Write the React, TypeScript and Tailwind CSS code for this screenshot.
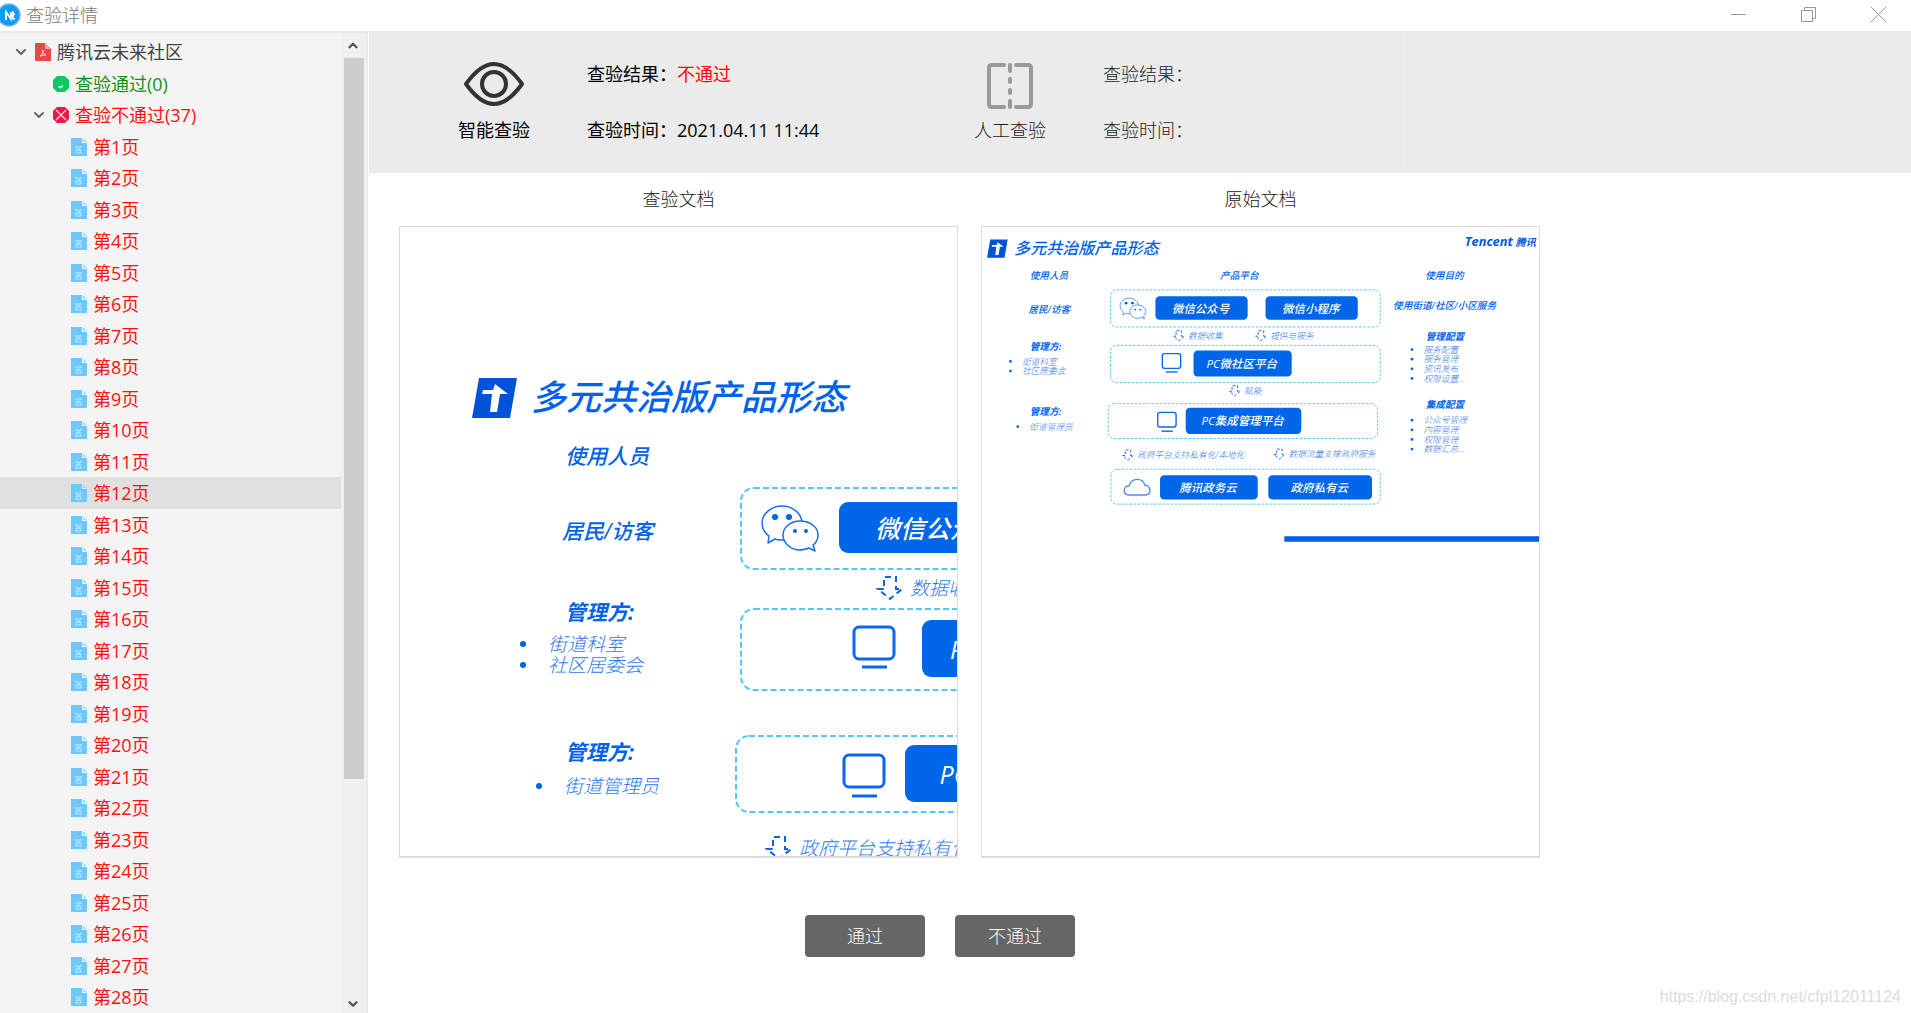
import React, { useState } from "react";
import { ChevronDown, ChevronUp } from "lucide-react";
import clsx from "clsx";

interface Box {
  x: number;
  y: number;
  w: number;
  h: number;
}

interface SlideText {
  x: number;
  y: number;
  text: string;
}

const PAGES = Array.from({ length: 37 }, (_, i) => i + 1);

const HEADINGS: SlideText[] = [
  { x: 104, y: 113, text: "使用人员" },
  { x: 519, y: 113, text: "产品平台" },
  { x: 966, y: 113, text: "使用目的" },
  { x: 101, y: 188, text: "居民/访客" },
  { x: 896, y: 179, text: "使用街道/社区/小区服务" },
];

const BOLD_HEADINGS: SlideText[] = [
  { x: 104, y: 269, text: "管理方:" },
  { x: 104, y: 409, text: "管理方:" },
  { x: 967, y: 247, text: "管理配置" },
  { x: 967, y: 394, text: "集成配置" },
];

const BULLETS: SlideText[] = [
  { x: 87, y: 300, text: "街道科室" },
  { x: 87, y: 321, text: "社区居委会" },
  { x: 103, y: 442, text: "街道管理员" },
  { x: 962, y: 274, text: "服务配置" },
  { x: 962, y: 295, text: "服务管理" },
  { x: 962, y: 316, text: "资讯发布" },
  { x: 962, y: 337, text: "权限设置…" },
  { x: 962, y: 428, text: "公众号管理" },
  { x: 962, y: 449, text: "内容管理" },
  { x: 962, y: 470, text: "权限管理" },
  { x: 962, y: 491, text: "数据汇总…" },
];

const FLOWS: SlideText[] = [
  { x: 416, y: 225, text: "数据收集" },
  { x: 595, y: 225, text: "提供与服务" },
  { x: 538, y: 345, text: "赋能" },
  { x: 305, y: 485, text: "政府平台支持私有化/本地化" },
  { x: 635, y: 483, text: "数据流量支撑政府服务" },
];

const GROUPS: Box[] = [
  { x: 280, y: 137, w: 588, h: 81 },
  { x: 280, y: 258, w: 588, h: 81 },
  { x: 275, y: 385, w: 587, h: 76 },
  { x: 281, y: 528, w: 587, h: 76 },
];

const BLOCKS: (Box & { text: string })[] = [
  { x: 378, y: 151, w: 201, h: 51, text: "微信公众号" },
  { x: 618, y: 151, w: 201, h: 51, text: "微信小程序" },
  { x: 461, y: 269, w: 214, h: 57, text: "PC微社区平台" },
  { x: 444, y: 394, w: 252, h: 57, text: "PC集成管理平台" },
  { x: 388, y: 541, w: 213, h: 53, text: "腾讯政务云" },
  { x: 624, y: 541, w: 226, h: 53, text: "政府私有云" },
];

function Slide({ viewBox }: { viewBox: string }) {
  return (
    <svg
      viewBox={viewBox}
      preserveAspectRatio="xMinYMin slice"
      className="w-full h-full block italic font-['Open_Sans','Noto_Sans_CJK_SC',sans-serif]"
    >
      {/* Title */}
      <path d="M18 27H56L49 67H11Z" fill="#0052d9" />
      <path d="M22 39H32L34 33L47 43H39L36 61H29L31 43H21Z" fill="#fff" />
      <text x="70" y="59" fontSize="35" fontWeight="500" fill="#0062ea">
        多元共治版产品形态
      </text>
      <text x="1052" y="42" fontSize="28" fontWeight="700" fill="#0057dd">
        Tencent
      </text>
      <text x="1163" y="41" fontSize="22" fontWeight="700" fill="#0057dd">
        腾讯
      </text>

      {HEADINGS.map((t) => (
        <text key={t.text} x={t.x} y={t.y} fontSize="21" fontWeight="500" fill="#0062ea">
          {t.text}
        </text>
      ))}
      {BOLD_HEADINGS.map((t) => (
        <text key={`${t.x}-${t.y}`} x={t.x} y={t.y} fontSize="21" fontWeight="700" fill="#0062ea">
          {t.text}
        </text>
      ))}
      {BULLETS.map((t) => (
        <g key={t.text}>
          <circle cx={t.x - 25} cy={t.y - 7} r="3" fill="#0062ea" />
          <text x={t.x} y={t.y} fontSize="19" fontWeight="300" fill="#2f78ea">
            {t.text}
          </text>
        </g>
      ))}

      {/* Dashed groups */}
      {GROUPS.map((g) => (
        <rect
          key={g.y}
          x={g.x}
          y={g.y}
          width={g.w}
          height={g.h}
          rx="13"
          fill="none"
          stroke="#55c8f2"
          strokeWidth="2"
          strokeDasharray="6 3"
        />
      ))}
      {BLOCKS.map((b) => (
        <g key={b.text}>
          <rect x={b.x} y={b.y} width={b.w} height={b.h} rx="9" fill="#0066e8" />
          <text
            x={b.x + b.w / 2 - 2}
            y={b.y + b.h / 2 + 10}
            textAnchor="middle"
            fontSize="25"
            fontWeight="500"
            fill="#fff"
          >
            {b.text}
          </text>
        </g>
      ))}
      {FLOWS.map((f) => (
        <g key={f.text}>
          <path
            d={`M${f.x + 7} ${f.y + 10}V${f.y + 1}H${f.x + 19}V${f.y + 13}H${f.x + 25}L${f.x + 13} ${f.y + 23}L${f.x + 1} ${f.y + 13}H${f.x + 7}`}
            fill="none"
            stroke="#1560dd"
            strokeWidth="2"
            strokeDasharray="6 4"
          />
          <text x={f.x + 33} y={f.y + 19} fontSize="19" fontWeight="300" fill="#2f78ea">
            {f.text}
          </text>
        </g>
      ))}

      {/* WeChat bubbles */}
      <g fill="#fff" stroke="#1a6cec" strokeWidth="1.5" strokeLinejoin="round">
        <path d="M321 155c11 0 20 8 20 17s-9 17-20 17c-3 0-5 0-7-1l-7 4 1-7c-4-3-7-8-7-13 0-9 9-17 20-17Z" />
        <path d="M339 170c10 0 18 6 18 14 0 4-2 8-5 10l2 6-6-3c-3 1-6 2-9 2-9 0-17-7-17-15s8-14 17-14Z" />
      </g>
      <g fill="#0062ea">
        <circle cx="314" cy="166" r="3" />
        <circle cx="328" cy="166" r="3" />
        <circle cx="334" cy="180" r="2" />
        <circle cx="345" cy="180" r="2" />
      </g>

      {/* Monitors */}
      <g fill="none" stroke="#0b67f0" strokeWidth="3">
        <rect x="393" y="276" width="40" height="32" rx="5" />
        <path d="M401 316h25" />
        <rect x="383" y="404" width="40" height="32" rx="5" />
        <path d="M391 445h25" />
      </g>

      {/* Cloud */}
      <path
        d="M320 584c-6 0-10-4-10-10s5-10 11-10c1-8 8-14 17-14s15 5 17 13c7 0 11 5 11 11s-4 10-10 10Z"
        fill="none"
        stroke="#4d8cf2"
        strokeWidth="3"
      />
      <rect x="659" y="674" width="560" height="12" fill="#0061e6" />
    </svg>
  );
}

function PdfIcon() {
  return (
    <svg viewBox="0 0 16 18" className="w-4 h-[18px] shrink-0">
      <path d="M0 0h10l6 6v12H0Z" fill="#ea4848" />
      <path d="M10 0l6 6h-6Z" fill="#f6a5a5" />
      <path d="M5 13c2-1 3-3 3-6 0 3 1 4 3 5-2 0-4 0-6 1Z" fill="none" stroke="#fbdcdc" strokeWidth="1" />
    </svg>
  );
}

function PageIcon() {
  return (
    <svg viewBox="0 0 16 18" className="w-4 h-[18px] shrink-0">
      <path d="M0 0h11v5h5v13H0Z" fill="#6cc8ff" />
      <path d="M12 0l4 4h-4Z" fill="#a5dcff" />
      <path
        d="M4 9h7M4 12h7M4 15h7M5 8l2 3-2 4M10 8l-2 3 2 4"
        fill="none"
        stroke="#b9e5ff"
        strokeWidth="1"
      />
    </svg>
  );
}

function PassIcon() {
  return (
    <svg viewBox="0 0 16 16" className="w-4 h-4 shrink-0">
      <path d="M4 0h8l4 4v8l-4 4H4l-4-4V4Z" fill="#10c868" />
      <path d="M5 10c1 1 3 0 5-1 0 2-2 4-4 3Z" fill="#fff" />
    </svg>
  );
}

function FailIcon() {
  return (
    <svg viewBox="0 0 16 16" className="w-4 h-4 shrink-0">
      <path d="M4 0h8l4 4v8l-4 4H4l-4-4V4Z" fill="#ee1644" />
      <path d="M3 3l10 10M13 3L3 13" stroke="#ffd5dd" strokeWidth="1.4" />
    </svg>
  );
}

function Sidebar() {
  const [selected, setSelected] = useState(12);

  return (
    <aside className="w-[368px] shrink-0 flex border-t-2 border-r-2 border-[#e8eaee] bg-[#f4f4f4] overflow-hidden">
      <ul className="flex-1 pt-[3px] overflow-y-auto [scrollbar-width:none] font-normal text-[#444]">
        <li className="h-8">
          <button className="w-full h-full flex items-center pl-[13px]">
            <ChevronDown className="w-4 h-4 mr-1.5 text-[#606870]" strokeWidth={3} />
            <PdfIcon />
            <span className="ml-1.5">腾讯云未来社区</span>
          </button>
        </li>
        <li className="h-[31px]">
          <button className="w-full h-full flex items-center pl-[53px] text-[#149014]">
            <PassIcon />
            <span className="ml-1.5">查验通过(0)</span>
          </button>
        </li>
        <li className="h-8">
          <button className="w-full h-full flex items-center pl-[31px] text-[#ff1010]">
            <ChevronDown className="w-4 h-4 mr-1.5 text-[#606870]" strokeWidth={3} />
            <FailIcon />
            <span className="ml-1.5">查验不通过(37)</span>
          </button>
        </li>
        {PAGES.map((page) => (
          <li key={page} className="h-8 even:h-[31px]">
            <button
              onClick={() => setSelected(page)}
              className={clsx(
                "w-full h-full flex items-center pl-[71px] text-[#ff1010]",
                page === selected && "bg-[#e0e0e0]"
              )}
            >
              <PageIcon />
              <span className="ml-1.5">第{page}页</span>
            </button>
          </li>
        ))}
      </ul>

      {/* Scrollbar */}
      <div className="w-[25px] shrink-0 flex flex-col items-center bg-[#f0f0f0] pr-0.5">
        <ChevronUp className="w-3.5 h-[25px] text-[#555]" strokeWidth={4} />
        <div className="flex-1 w-full pl-[3px]">
          <div className="h-[77%] bg-[#cdcdcd]" />
        </div>
        <ChevronDown className="w-3.5 h-[18px] text-[#555]" strokeWidth={4} />
      </div>
    </aside>
  );
}

interface CheckPanelProps {
  icon: React.ReactNode;
  title: string;
  result?: string;
  time?: string;
}

function CheckPanel({ icon, title, result, time }: CheckPanelProps) {
  return (
    <section className="flex pt-7">
      <div className="w-[250px] flex flex-col items-center">
        <div className="h-14 flex items-start">{icon}</div>
        <span>{title}</span>
      </div>
      <dl className="-ml-8 flex flex-col gap-7">
        <div className="flex">
          <dt>查验结果：</dt>
          <dd className="text-[#ff0000]">{result}</dd>
        </div>
        <div className="flex">
          <dt>查验时间：</dt>
          <dd>{time}</dd>
        </div>
      </dl>
    </section>
  );
}

export default function App() {
  return (
    <div className="relative h-screen flex flex-col overflow-hidden bg-white text-lg leading-7 font-light text-[#222] font-['Open_Sans','Noto_Sans_CJK_SC',sans-serif]">
      {/* Title bar */}
      <header className="h-[31px] shrink-0 flex items-center justify-between pb-0.5 pr-6 text-[#777]">
        <div className="flex items-center">
          <svg viewBox="0 0 21 24" className="w-[21px] h-6 mr-[5px]">
            <circle cx="9" cy="12" r="11" fill="#0a9cf8" stroke="#7fb4dd" strokeWidth="1.5" />
            <path d="M6 17V9l5 7V9M13 8v7c0 1 0 1 2 1M11 11h4" fill="none" stroke="#fff" strokeWidth="1.8" />
          </svg>
          <h1>查验详情</h1>
        </div>
        <div className="flex gap-[54px]">
          <button aria-label="最小化">
            <svg viewBox="0 0 16 16" className="w-4 h-4">
              <path d="M0 7.5h15" stroke="#999" />
            </svg>
          </button>
          <button aria-label="还原">
            <svg viewBox="0 0 16 16" className="w-4 h-4">
              <path d="M.5 3.5h11v11H.5ZM3.5 3.5v-3h11v11h-3" fill="none" stroke="#999" />
            </svg>
          </button>
          <button aria-label="关闭">
            <svg viewBox="0 0 16 16" className="w-4 h-4">
              <path d="M0 0l15 15M15 0L0 15" stroke="#999" />
            </svg>
          </button>
        </div>
      </header>

      <div className="flex-1 min-h-0 flex">
        <Sidebar />

        <main className="flex-1 min-w-0 pl-px">
          {/* Check results */}
          <div className="h-[142px] grid grid-cols-[516fr_516fr_510fr] bg-[#ebebeb] border-y border-[#e4e7ec]">
            <div className="font-normal text-black">
              <CheckPanel
                icon={
                  <svg viewBox="0 0 60 44" className="w-[60px] h-11 mt-0.5" fill="none" stroke="#333" strokeWidth="4">
                    <path d="M2 22C12 8 21 2 30 2s18 6 28 20C48 36 39 42 30 42S12 36 2 22Z" strokeLinejoin="round" />
                    <circle cx="30" cy="22" r="12" />
                  </svg>
                }
                title="智能查验"
                result="不通过"
                time="2021.04.11 11:44"
              />
            </div>
            <div className="border-r border-[#e4e7ec]">
              <CheckPanel
                icon={
                  <svg
                    viewBox="0 0 48 48"
                    className="w-12 h-12 mt-0.5"
                    fill="none"
                    stroke="#999"
                    strokeWidth="4"
                    strokeLinecap="round"
                  >
                    <path d="M18 3H6Q3 3 3 6V42Q3 45 6 45H18M30 3H42Q45 3 45 6V42Q45 45 42 45H30" />
                    <path d="M24 3V9M24 17V20M24 28V31M24 39V45" />
                  </svg>
                }
                title="人工查验"
              />
            </div>
          </div>

          {/* Documents */}
          <div className="grid grid-cols-[559fr_559fr_348fr] gap-x-[23px] pl-[30px] pt-3 text-center">
            <figure>
              <figcaption className="pb-[13px]">查验文档</figcaption>
              <div className="aspect-[559/632] border border-b-2 border-[#dcdcdc] overflow-hidden">
                <Slide viewBox="-61 -124 557 629" />
              </div>
            </figure>
            <figure>
              <figcaption className="pb-[13px]">原始文档</figcaption>
              <div className="aspect-[559/632] border border-b-2 border-[#dcdcdc] overflow-hidden">
                <Slide viewBox="0 0 1214 1371" />
              </div>
            </figure>
          </div>

          <div className="flex gap-[30px] pl-[436px] pt-[57px] text-white">
            <button className="w-[120px] h-[42px] rounded bg-[#666]">通过</button>
            <button className="w-[120px] h-[42px] rounded bg-[#666]">不通过</button>
          </div>
        </main>
      </div>

      <span className="absolute right-2.5 bottom-1 text-base text-[#dcdcdc] font-['Liberation_Sans',sans-serif]">
        https://blog.csdn.net/cfpl12011124
      </span>
    </div>
  );
}
